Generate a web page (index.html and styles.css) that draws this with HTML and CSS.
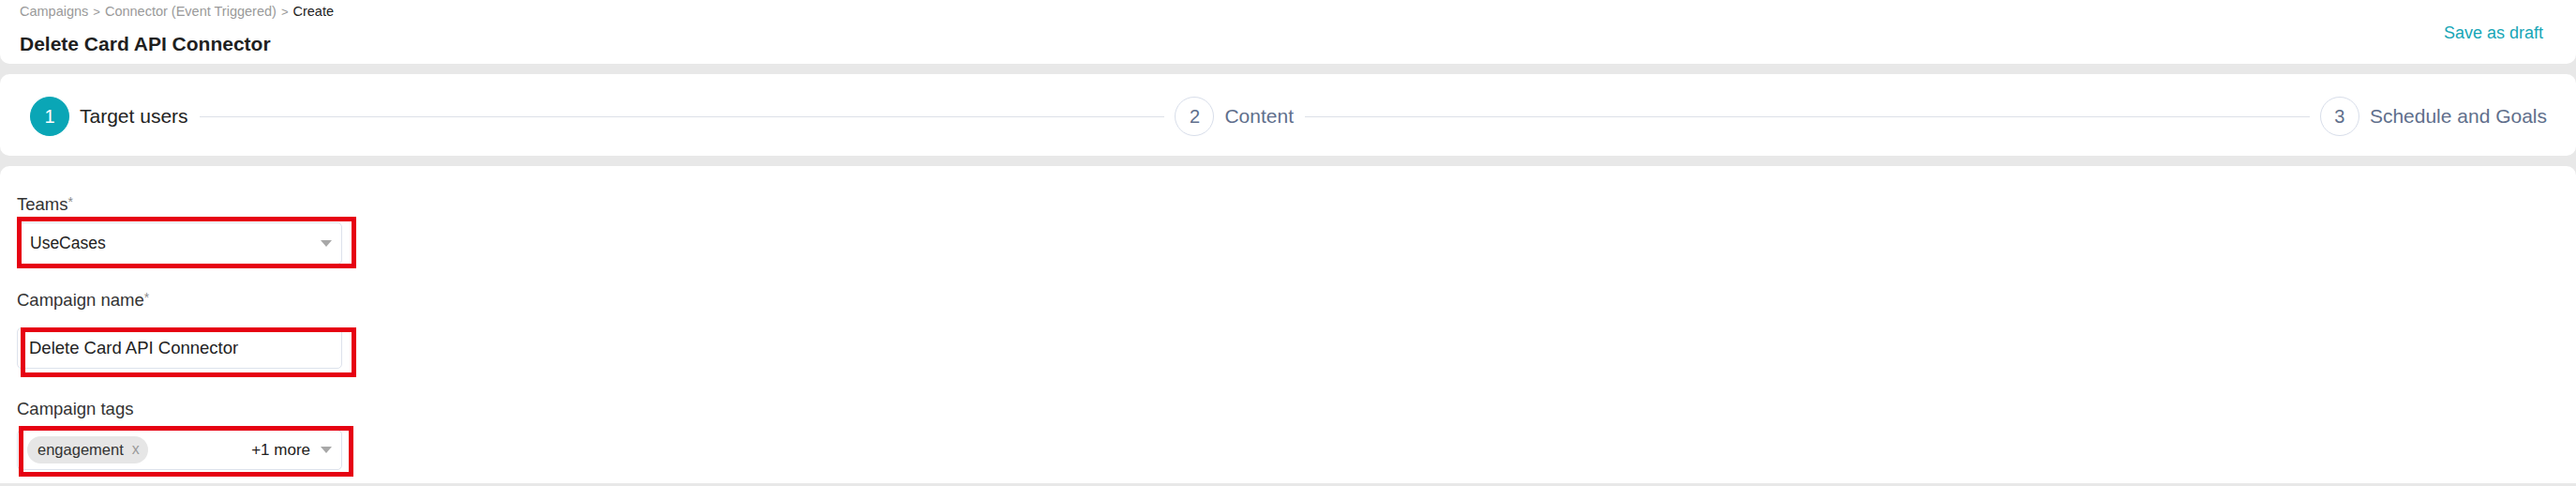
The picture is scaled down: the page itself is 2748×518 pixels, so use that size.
FILE: index.html
```html
<!DOCTYPE html>
<html lang="en">
<head>
<meta charset="utf-8">
<title>Delete Card API Connector</title>
<link rel="stylesheet" href="styles.css">
</head>
<body>
<header class="page-header">
  <div class="header-main">
    <div class="breadcrumb"><span class="crumb">Campaigns</span><span class="sep">&gt;</span><span class="crumb">Connector (Event Triggered)</span><span class="sep">&gt;</span><span class="crumb-current">Create</span></div>
    <h1 class="title">Delete Card API Connector</h1>
  </div>
  <a class="save-draft" href="#">Save as draft</a>
</header>

<nav class="stepper">
  <div class="step step-active"><span class="step-num">1</span><span class="step-label">Target users</span><span class="step-line"></span></div>
  <div class="step"><span class="step-num">2</span><span class="step-label">Content</span><span class="step-line"></span></div>
  <div class="step step-last"><span class="step-num">3</span><span class="step-label">Schedule and Goals</span></div>
</nav>

<main class="form-card">
  <div class="field field-teams">
    <label class="field-label">Teams<span class="req">*</span></label>
    <div class="control">
      <div class="input select"><span class="value">UseCases</span><span class="caret"></span></div>
      <div class="mark mark-teams"></div>
    </div>
  </div>
  <div class="field field-name">
    <label class="field-label">Campaign name<span class="req">*</span></label>
    <div class="control">
      <div class="input text-input"><span class="value">Delete Card API Connector</span></div>
      <div class="mark mark-name"></div>
    </div>
  </div>
  <div class="field field-tags">
    <label class="field-label">Campaign tags</label>
    <div class="control">
      <div class="input select tags">
        <span class="chip">engagement <span class="chip-x">x</span></span>
        <span class="more">+1 more</span><span class="caret"></span>
      </div>
      <div class="mark mark-tags"></div>
    </div>
  </div>
</main>
</body>
</html>
```

FILE: styles.css
```css
* { box-sizing: border-box; }
html, body { margin: 0; padding: 0; }
body {
  background: #e8e8e8;
  font-family: "Liberation Sans", Arial, sans-serif;
  color: #222;
  width: 2748px;
  height: 518px;
  overflow: hidden;
}

.page-header {
  height: 68px;
  background: #fff;
  border-radius: 0 0 10px 10px;
  display: flex;
  justify-content: space-between;
  align-items: center;
  padding: 0 35px 0 21px;
}
.header-main { display: flex; flex-direction: column; align-self: flex-start; }
.breadcrumb {
  font-size: 14.5px;
  line-height: 18px;
  margin-top: 3px;
  color: #9a9a9a;
  white-space: nowrap;
}
.breadcrumb .sep { margin: 0 5px; font-size: 13px; }
.crumb-current { color: #222; }
.title {
  margin: 12px 0 0;
  font-size: 21px;
  line-height: 26px;
  font-weight: bold;
  color: #1f1f1f;
}
.save-draft {
  color: #16a6b6;
  font-size: 18px;
  text-decoration: none;
  margin-top: 2px;
}

.stepper {
  margin-top: 11px;
  height: 87px;
  background: #fff;
  border-radius: 10px;
  display: flex;
  align-items: center;
  padding: 3px 31px 0 32px;
}
.step { flex: 1; display: flex; align-items: center; }
.step-last { flex: none; }
.step-num {
  flex: none;
  width: 42px;
  height: 42px;
  border-radius: 50%;
  border: 1px solid #d8deea;
  display: flex;
  align-items: center;
  justify-content: center;
  font-size: 20px;
  color: #5f6f8c;
}
.step-label { margin-left: 11px; font-size: 21px; color: #5f6f8c; white-space: nowrap; }
.step-active .step-num { background: #0aa6b6; border-color: #0aa6b6; color: #fff; }
.step-active .step-label { color: #222; }
.step-line { flex: 1; height: 1px; background: #dde0e8; margin: 0 11px 0 12px; }

.form-card {
  margin-top: 11px;
  height: 338px;
  background: #fff;
  border-radius: 10px 10px 0 0;
  padding: 28px 18px 0;
}
.field-label {
  display: block;
  font-size: 18.5px;
  line-height: 20px;
  color: #333;
}
.req { color: #8a8a8a; font-size: 14px; vertical-align: 4px; }
.control { position: relative; width: 347px; }
.input {
  height: 44px;
  border: 1px solid #dde2ec;
  border-radius: 5px;
  background: #fff;
  display: flex;
  align-items: center;
  padding: 0 10px 0 13px;
  font-size: 17.5px;
  color: #222;
}
.select .value { flex: 1; }
.caret {
  width: 0;
  height: 0;
  border-left: 6px solid transparent;
  border-right: 6px solid transparent;
  border-top: 7px solid #a8a8a8;
}
.field-teams .control { margin-top: 9px; }
.field-teams .input { height: 45px; }
.field-name { margin-top: 25px; }
.field-name .control { margin-top: 19px; }
.text-input { padding-left: 12px; font-size: 18.5px; }
.field-tags { margin-top: 33px; }
.field-tags .control { margin-top: 12px; }
.field-tags .input { height: 43px; padding-left: 10px; }
.chip {
  height: 29px;
  border-radius: 15px;
  background: #e6e6e6;
  display: inline-flex;
  align-items: center;
  padding: 0 9px 0 11px;
  font-size: 16.5px;
  color: #333;
  margin-top: -1px;
}
.chip-x { color: #9a9a9a; margin-left: 9px; font-size: 16px; }
.more { margin-left: auto; margin-right: 11px; font-size: 17px; color: #222; }

.mark {
  position: absolute;
  border: 5px solid #e60012;
  pointer-events: none;
}
.mark-teams { left: 0; top: -6px; right: -15px; bottom: -4px; }
.mark-name { left: 4px; top: 0; right: -15px; bottom: -9px; }
.mark-tags { left: 2px; top: -4px; right: -12px; bottom: -7px; }
```
